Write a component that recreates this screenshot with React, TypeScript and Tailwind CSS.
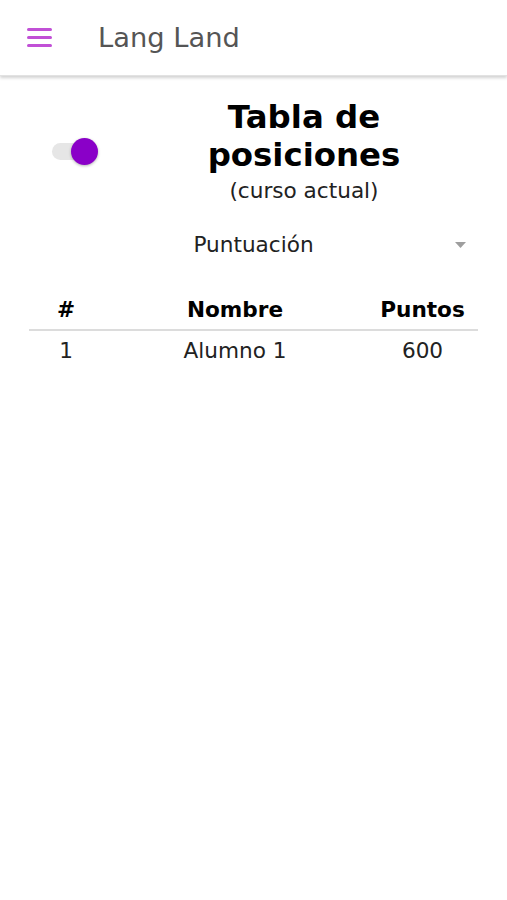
import React from "react";

export default function App() {
  return (
    <div className="min-h-[900px] w-full bg-white" style={{ fontFamily: '"DejaVu Sans", sans-serif' }}>
      <header className="relative flex h-[76px] items-center shadow-[0_2px_3px_rgba(0,0,0,0.18)] border-b border-[#e2e2e2]">
        <div className="ml-[27px] flex w-[25px] flex-col gap-[5px]">
          <div className="h-[3px] rounded-full bg-[#c150d6]" />
          <div className="h-[3px] rounded-full bg-[#c150d6]" />
          <div className="h-[3px] rounded-full bg-[#c150d6]" />
        </div>
        <div className="ml-[46px] mt-[2px] text-[27.3px] text-[#555555]">Lang Land</div>
      </header>

      <div className="mx-[29px] w-[449px]">
        <div className="flex pt-[22px]">
          <div className="w-[101px] pt-[43px]">
            <div className="relative ml-[23px] h-[21px] w-[44px]">
              <div className="absolute left-0 top-[2px] h-[17px] w-[40px] rounded-full bg-[#e6e6e6]" />
              <div className="absolute left-[19px] top-[-3px] h-[27px] w-[27px] rounded-full bg-[#8a00c8] shadow-[0_1px_3px_rgba(0,0,0,0.3)]" />
            </div>
          </div>
          <div className="flex flex-1 flex-col items-center">
            <div className="text-center text-[32.4px] font-bold leading-[38px] text-black">
              Tabla de
              <br />
              posiciones
            </div>
            <div className="mt-[3px] text-[21.6px] leading-[28px] text-[#222]">(curso actual)</div>
          </div>
        </div>

        <div className="relative mt-[25px] flex h-[30px] items-center justify-center">
          <span className="text-[21.6px] text-[#222]">Puntuación</span>
          <svg className="absolute right-[12px] top-[12px]" width="11" height="6" viewBox="0 0 11 6">
            <path d="M0 0 L11 0 L5.5 6 Z" fill="#9e9e9e" />
          </svg>
        </div>

        <table className="mt-[36px] w-[449px] border-collapse text-[21.6px]">
          <thead>
            <tr className="border-b-2 border-[#dcdcdc]">
              <th className="w-[74px] pb-[5px] font-bold text-black leading-[28px]">#</th>
              <th className="w-[264px] pb-[5px] font-bold text-black leading-[28px]">Nombre</th>
              <th className="w-[111px] pb-[5px] font-bold text-black leading-[28px]">Puntos</th>
            </tr>
          </thead>
          <tbody>
            <tr>
              <td className="pt-[6px] text-center leading-[28px] text-[#222]">1</td>
              <td className="pt-[6px] text-center leading-[28px] text-[#222]">Alumno 1</td>
              <td className="pt-[6px] text-center leading-[28px] text-[#222]">600</td>
            </tr>
          </tbody>
        </table>
      </div>
    </div>
  );
}
